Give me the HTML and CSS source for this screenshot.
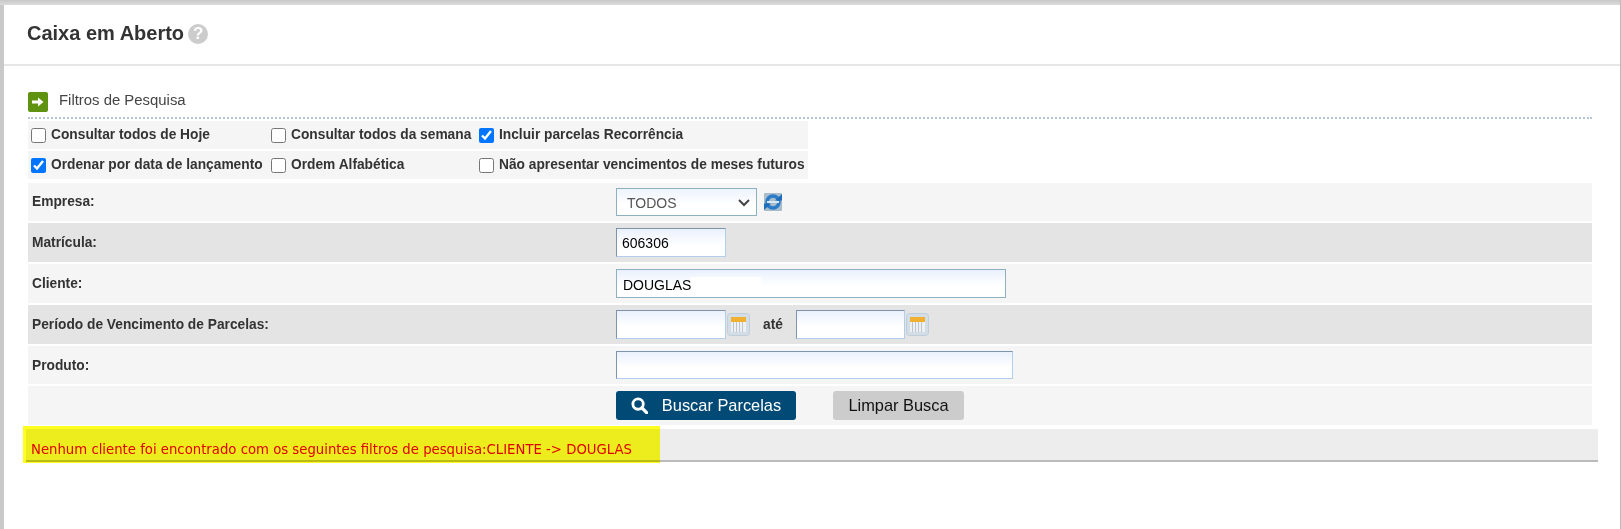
FILE: index.html
```html
<!DOCTYPE html>
<html lang="pt">
<head>
<meta charset="utf-8">
<title>Caixa em Aberto</title>
<link rel="stylesheet" href="styles.css">
</head>
<body>
<div class="page">
  <header class="head">
    <h1>Caixa em Aberto</h1>
    <span class="help">?</span>
  </header>
  <section class="content">
    <div class="section-title">
      <span class="go"><svg width="12" height="10" viewBox="0 0 12 10"><path d="M0 3.500h6V0.500L11.500 5 6 9.500V6.500H0z" fill="#fff"/></svg></span>
      <span>Filtros de Pesquisa</span>
    </div>
    <div class="checks">
      <div class="check-row">
        <label class="c1"><input type="checkbox">Consultar todos de Hoje</label>
        <label class="c2"><input type="checkbox">Consultar todos da semana</label>
        <label class="c3"><input type="checkbox" checked>Incluir parcelas Recorrência</label>
      </div>
      <div class="check-row">
        <label class="c1"><input type="checkbox" checked>Ordenar por data de lançamento</label>
        <label class="c2"><input type="checkbox">Ordem Alfabética</label>
        <label class="c3"><input type="checkbox">Não apresentar vencimentos de meses futuros</label>
      </div>
    </div>
    <div class="form">
      <div class="row light r-empresa">
        <div class="lbl">Empresa:</div>
        <div class="val">
          <div class="select">TODOS<svg class="chev" width="12" height="8" viewBox="0 0 12 8"><path d="M1 1l5 5 5-5" fill="none" stroke="#444" stroke-width="2"/></svg></div>
          <svg class="refresh" width="18" height="18" viewBox="0 0 18 18">
            <rect width="18" height="18" rx="1" fill="#a9bccb"/>
            <circle cx="9" cy="9" r="6" fill="none" stroke="#2a7cc8" stroke-width="3.500"/>
            <path d="M11 7.500h7V1z" fill="#1f6db8"/>
            <path d="M7 10.500H0V17z" fill="#1f6db8"/>
            <path d="M3 8h12v2H3z" fill="#d7e8f7"/>
          </svg>
        </div>
      </div>
      <div class="row dark r-mat">
        <div class="lbl">Matrícula:</div>
        <div class="val"><div class="input w110 tall">606306</div></div>
      </div>
      <div class="row light r-cli">
        <div class="lbl">Cliente:</div>
        <div class="val"><div class="input w390 teal">DOUGLAS<span class="patch"></span></div></div>
      </div>
      <div class="row dark r-per">
        <div class="lbl">Período de Vencimento de Parcelas:</div>
        <div class="val">
          <div class="input w110 tall"></div>
          <svg class="cal" width="23" height="23" viewBox="0 0 23 23">
            <rect x=".5" y=".5" width="22" height="22" rx="3" fill="#d3dde6" stroke="#c0cedb"/>
            <rect x="4" y="4" width="15" height="5" fill="#f0b030"/>
            <rect x="4" y="9" width="15" height="10" fill="#eef1f4"/>
            <path d="M6.500 9v10M9.500 9v10M12.500 9v10M15.500 9v10" stroke="#bcc5ce"/>
          </svg>
          <span class="ate">até</span>
          <div class="input w109 tall"></div>
          <svg class="cal" width="23" height="23" viewBox="0 0 23 23">
            <rect x=".5" y=".5" width="22" height="22" rx="3" fill="#d3dde6" stroke="#c0cedb"/>
            <rect x="4" y="4" width="15" height="5" fill="#f0b030"/>
            <rect x="4" y="9" width="15" height="10" fill="#eef1f4"/>
            <path d="M6.500 9v10M9.500 9v10M12.500 9v10M15.500 9v10" stroke="#bcc5ce"/>
          </svg>
        </div>
      </div>
      <div class="row light r-prod">
        <div class="lbl">Produto:</div>
        <div class="val"><div class="input w397"></div></div>
      </div>
      <div class="row light r-btn">
        <div class="lbl"></div>
        <div class="val">
          <button class="btn primary"><svg width="17" height="17" viewBox="0 0 18 18"><circle cx="7.500" cy="7.500" r="5.500" fill="none" stroke="#fff" stroke-width="3"/><path d="M11.500 11.500l5 5" stroke="#fff" stroke-width="3.500" stroke-linecap="round"/></svg>Buscar Parcelas</button>
          <button class="btn grey">Limpar Busca</button>
        </div>
      </div>
    </div>
    <div class="message">Nenhum cliente foi encontrado com os seguintes filtros de pesquisa:CLIENTE -&gt; DOUGLAS</div>
    <div class="highlight"></div>
  </section>
</div>
</body>
</html>
```
FILE: styles.css
```css
* { box-sizing: border-box; }
html, body { margin: 0; height: 100%; background: #fff; overflow: hidden; }
body { font-family: "Liberation Sans", Arial, sans-serif; color: #333; }
.page { height: 529px; border-left: 4px solid #c9c9c9; border-right: 1px solid #bbb; background: #fff; position: relative; }
.page::before { content: ""; display: block; height: 5px; margin-left: -4px; background: linear-gradient(#c8c8c8, #dcdcdc); }
.head { height: 61px; border-bottom: 2px solid #e6e6e6; display: flex; align-items: center; padding: 0 0 2px 23px; }
h1 { margin: 0; font-size: 20px; font-weight: 700; color: #333; }
.help { width: 20px; height: 20px; margin-left: 4px; border-radius: 50%; background: #ccc; color: #fff; font-weight: 700; font-size: 17px; display: flex; align-items: center; justify-content: center; }
.content { padding: 26px 0 0 24px; position: relative; }
.section-title { width: 1564px; height: 27px; border-bottom: 2px dotted #b4c6d8; display: flex; gap: 11px; font-size: 14.900px; color: #444; align-items: flex-start; line-height: 16px; }
.go { width: 20px; height: 20px; background: #5f9211; border-radius: 2px; display: flex; align-items: center; justify-content: center; }
.checks { width: 780px; margin-top: 2px; display: flex; flex-direction: column; gap: 2px; }
.check-row { height: 28px; padding-bottom: 2px; background: #f5f5f5; display: flex; align-items: center; font-size: 13.750px; font-weight: 700; color: #333; }
.check-row label { display: flex; align-items: center; flex: none; white-space: nowrap; }
.check-row input { flex: none; width: 15px; height: 15px; margin: 2px 5px 0 0; accent-color: #0075ff; }
.c1 { width: 243px; padding-left: 3px; }
.c2 { width: 208px; }
.c3 { width: 300px; }
.form { width: 1564px; margin-top: 4px; display: flex; flex-direction: column; gap: 2px; }
.row { display: flex; align-items: center; font-size: 13.750px; font-weight: 700; color: #333; height: 39px; }
.r-empresa { height: 38px; }
.r-prod { height: 38px; }
.r-empresa .lbl { padding-bottom: 2px; }
.light { background: #f5f5f5; }
.dark { background: #e4e4e4; }
.lbl { width: 588px; padding-left: 4px; flex: none; }
.val { display: flex; align-items: center; flex: 1; }
.select { width: 141px; height: 28px; border: 1px solid #8fb0c0; background: linear-gradient(#edf3fe, #fff 60%); font-weight: 400; font-size: 14px; color: #555; display: flex; align-items: center; justify-content: space-between; padding: 1px 6px 0 10px; }
.refresh { margin-left: 7px; }
.input { height: 28px; background: linear-gradient(#eaf1fd, #fff 60%); border: 1px solid #8fb0c0; font-weight: 400; font-size: 14px; color: #000; display: flex; align-items: center; padding: 2px 0 0 6px; position: relative; }
.tall { height: 29px; border-color: #7f93ad #b5cdec #b5cdec #7f93ad; padding: 0 0 0 5px; }
.teal { height: 29px; }
.w110 { width: 110px; }
.w109 { width: 109px; }
.w390 { width: 390px; }
.w397 { width: 397px; border-color: #7f93ad #b5cdec #b5cdec #7f93ad; }
.patch { position: absolute; left: 74px; top: 7px; width: 70px; height: 12px; background: #fff; }
.cal { margin-left: 1px; flex: none; }
.ate { width: 46px; text-align: center; }
.btn { height: 29px; border: 0; border-radius: 3px; font: 16.400px "Liberation Sans", Arial, sans-serif; display: flex; align-items: center; justify-content: center; cursor: pointer; }
.primary { width: 180px; background: #004a75; color: #fff; gap: 14px; padding: 0; }
.grey { width: 131px; margin-left: 37px; background: #ccc; color: #111; }
.message { width: 1572px; height: 33px; margin: 4px 0 0 -2px; background: #ededed; border-bottom: 2px solid #bbb; color: #e00000; font-family: "DejaVu Sans", sans-serif; font-size: 13.250px; padding: 14px 0 0 5px; line-height: 14px; }
.highlight { position: absolute; left: 19px; top: 360px; width: 637px; height: 37px; background: #ffff20; mix-blend-mode: multiply; }
```
